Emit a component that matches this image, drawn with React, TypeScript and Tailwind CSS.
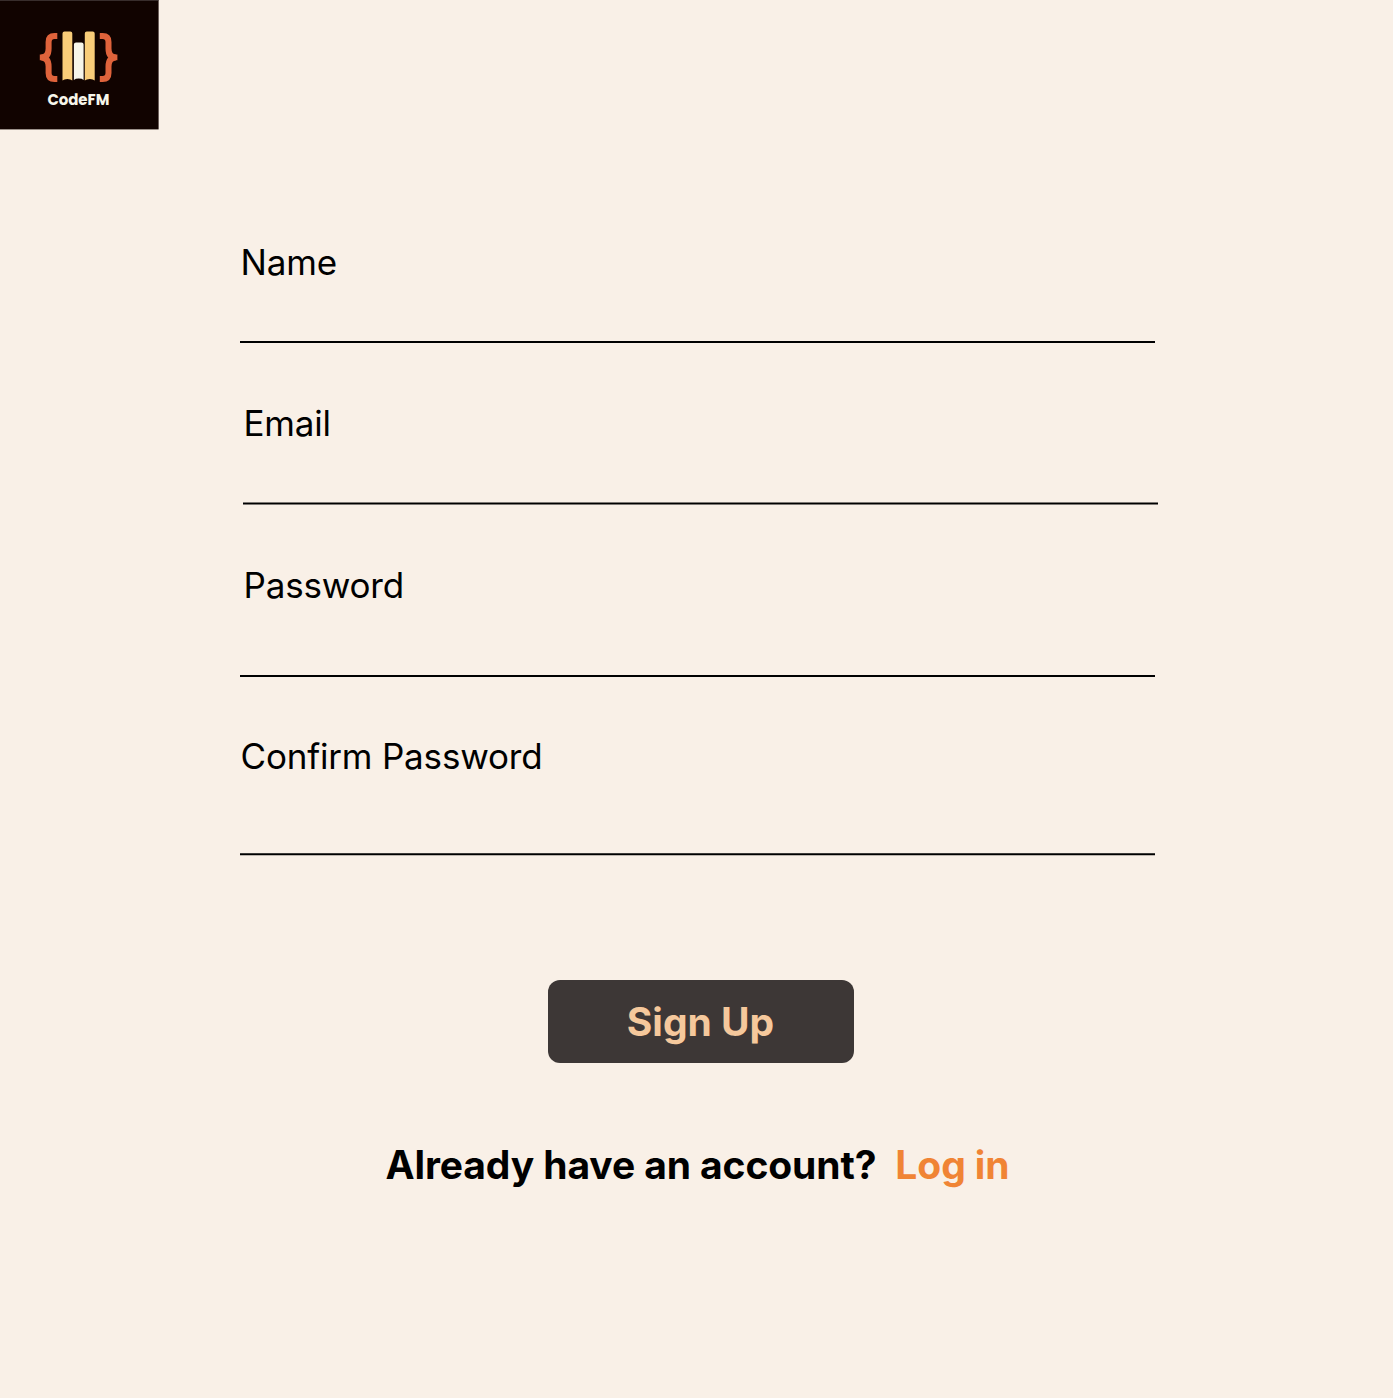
import React from "react";

function Logo() {
  return (
    <svg
      className="block h-[130px] w-[159px]"
      viewBox="0 0 159 130"
      role="img"
      aria-label="CodeFM"
    >
      <rect width="158.6" height="129.4" fill="#110300" />
      <rect width="158.6" height="0.7" fill="#4a4140" />
      <g fill="none" stroke="#df633b" strokeWidth="6">
        <path d="M57.3 36.1H54.5Q48.6 36.1 48.6 42V48.5Q48.6 57.4 41.2 57.4Q48.6 57.4 48.6 66.5V73Q48.6 79 54.5 79H57.3" />
        <path d="M99.8 36.1H102.6Q108.5 36.1 108.5 42V48.5Q108.5 57.4 115.9 57.4Q108.5 57.4 108.5 66.5V73Q108.5 79 102.6 79H99.8" />
      </g>
      <path fill="#df633b" d="M39.8 54.6H44V60.2H39.8ZM117.4 54.6H113.2V60.2H117.4Z" />
      <path fill="#f9cd79" d="M62.5 33.4Q62.5 31.4 64.5 31.4H70.3Q72.3 31.4 72.3 33.4V80.5Q70.8 79 67.4 79Q64 79 62.5 80.5Z" />
      <path fill="#f9cd79" d="M84.8 33.4Q84.8 31.4 86.8 31.4H92.7Q94.7 31.4 94.7 33.4V80.5Q93.2 79 89.8 79Q86.4 79 84.8 80.5Z" />
      <path fill="#f7f6ea" d="M73.9 44.5Q73.9 42.4 76 42.4H81.5Q83.6 42.4 83.6 44.5V80Q82 78.6 78.8 78.6Q75.5 78.6 73.9 80Z" />
      <text
        x="47.4"
        y="105"
        fill="#f7f6ea"
        textLength="62"
        lengthAdjust="spacingAndGlyphs"
        className="font-['Poppins','Inter',sans-serif] text-[15px] font-bold"
      >
        CodeFM
      </text>
    </svg>
  );
}

type FieldProps = {
  label: string;
  type: string;
  className: string;
  labelClass?: string;
  lineClass?: string;
};

function Field({ label, type, className, labelClass = "", lineClass = "h-0.5" }: FieldProps) {
  return (
    <label className={`flex w-[914.5px] flex-col ${className}`}>
      <span className={`text-[35px] leading-[44px] tracking-[-0.18px] ${labelClass}`}>{label}</span>
      <input type={type} className="min-h-0 w-full flex-1 bg-transparent text-2xl outline-none" />
      <span className={`w-full shrink-0 bg-black ${lineClass}`} />
    </label>
  );
}

export default function App() {
  return (
    <main className="flex h-[1398px] w-[1393px] flex-col overflow-hidden bg-[#f9f0e7] font-['Inter',sans-serif] text-black">
      <header className="h-[130px]">
        <Logo />
      </header>
      <form className="flex flex-col pt-[110px]" onSubmit={(e) => e.preventDefault()}>
        <Field label="Name" type="text" className="ml-[240px] h-[103px]" labelClass="pl-[0.5px]" />
        <Field
          label="Email"
          type="email"
          className="ml-[243px] mt-[58px] h-[104px]"
          labelClass="pl-[0.5px]"
          lineClass="h-[3px] border-y border-[#7d7874]"
        />
        <Field
          label="Password"
          type="password"
          className="ml-[240px] mt-[58px] h-[114px]"
          labelClass="pl-[3.5px]"
        />
        <Field
          label="Confirm Password"
          type="password"
          className="ml-[240px] mt-[57px] h-[122px]"
          labelClass="pl-[0.5px]"
          lineClass="h-[3px] border-t border-b border-t-[#3e3c3a] border-b-[#bbb4ad]"
        />
        <button
          type="submit"
          className="ml-[548px] mt-[124px] flex h-[83px] w-[306px] items-center justify-center rounded-xl bg-[#3d3736] pt-px pr-px text-[39px] leading-[48px] font-bold text-[#f5c89c]"
        >
          Sign Up
        </button>
      </form>
      <p className="ml-[385.5px] mt-[78px] flex gap-[19px] text-[39px] leading-[48px] font-bold tracking-[-0.1px] whitespace-nowrap">
        <span>Already have an account?</span>
        <a href="#" className="text-[#f08435]">
          Log in
        </a>
      </p>
    </main>
  );
}
